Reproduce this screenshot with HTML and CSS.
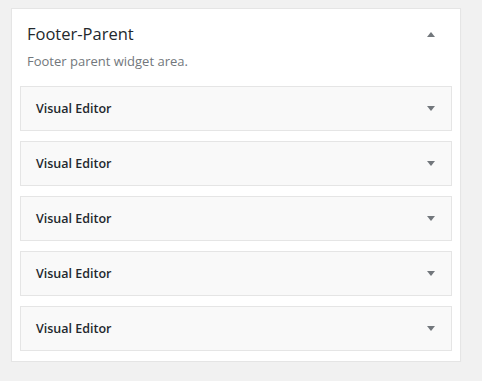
FILE: index.html
```html
<!DOCTYPE html>
<html>
<head>
<meta charset="utf-8">
<link rel="stylesheet" href="styles.css">
</head>
<body>
<div class="sidebar">
  <div class="sidebar-head">
    <h2 class="sidebar-title">Footer-Parent</h2>
    <span class="arrow"><svg width="8" height="5" viewBox="0 0 8 5"><polygon points="4,0 8,5 0,5"/></svg></span>
  </div>
  <p class="sidebar-desc">Footer parent widget area.</p>
  <div class="widgets">
    <div class="widget"><span class="widget-title">Visual Editor</span><span class="arrow"><svg width="8" height="5" viewBox="0 0 8 5"><polygon points="0,0 8,0 4,5"/></svg></span></div>
    <div class="widget"><span class="widget-title">Visual Editor</span><span class="arrow"><svg width="8" height="5" viewBox="0 0 8 5"><polygon points="0,0 8,0 4,5"/></svg></span></div>
    <div class="widget"><span class="widget-title">Visual Editor</span><span class="arrow"><svg width="8" height="5" viewBox="0 0 8 5"><polygon points="0,0 8,0 4,5"/></svg></span></div>
    <div class="widget"><span class="widget-title">Visual Editor</span><span class="arrow"><svg width="8" height="5" viewBox="0 0 8 5"><polygon points="0,0 8,0 4,5"/></svg></span></div>
    <div class="widget"><span class="widget-title">Visual Editor</span><span class="arrow"><svg width="8" height="5" viewBox="0 0 8 5"><polygon points="0,0 8,0 4,5"/></svg></span></div>
  </div>
</div>
</body>
</html>
```
FILE: styles.css
```css
html, body {
  margin: 0;
  padding: 0;
}
body {
  background: #f1f1f1;
  font-family: "Open Sans", "Noto Sans", sans-serif;
  color: #23282d;
  padding: 8px 0 0 11px;
}
.sidebar {
  box-sizing: border-box;
  width: 450px;
  background: #fff;
  border: 1px solid #e5e5e5;
  box-shadow: 0 1px 1px rgba(0, 0, 0, 0.04);
  padding: 0 8px 10px 8px;
}
.sidebar-head {
  display: flex;
  align-items: center;
  justify-content: space-between;
  padding: 13px 11px 0 7px;
}
.sidebar-title {
  margin: 0;
  font-size: 16.5px;
  font-weight: 400;
  line-height: 24px;
  color: #23282d;
}
.arrow {
  display: flex;
  align-items: center;
  justify-content: center;
  width: 20px;
  height: 20px;
}
.arrow svg {
  fill: #72777c;
  display: block;
}
.sidebar-desc {
  margin: 5px 0 0 7px;
  font-size: 13px;
  line-height: 20px;
  color: #72777c;
}
.widgets {
  display: flex;
  flex-direction: column;
  gap: 10px;
  margin-top: 15px;
}
.widget {
  box-sizing: border-box;
  height: 45px;
  background: #f9f9f9;
  border: 1px solid #e5e5e5;
  display: flex;
  align-items: center;
  justify-content: space-between;
  padding: 0 10px 0 15px;
}
.widget-title {
  font-size: 12.5px;
  font-weight: 600;
  color: #23282d;
}
```
